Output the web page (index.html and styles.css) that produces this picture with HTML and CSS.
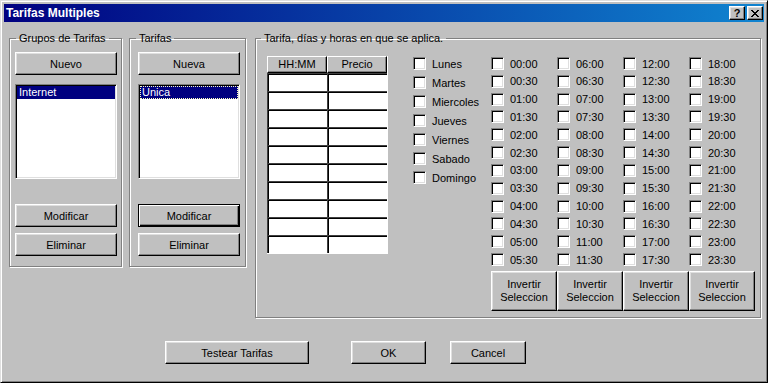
FILE: index.html
```html
<!DOCTYPE html>
<html lang="es">
<head>
<meta charset="UTF-8">
<title>Tarifas Multiples</title>
<link rel="stylesheet" href="styles.css">
</head>
<body>
<div class="window">
  <div class="titlebar">
    <span class="title">Tarifas Multiples</span>
    <div class="title-btns">
      <span class="tbtn help">?</span>
      <span class="tbtn">
        <svg width="8" height="7" viewBox="0 0 8 7" shape-rendering="crispEdges">
          <path d="M0 0h2v1h-2zM6 0h2v1h-2zM1 1h2v1h-2zM5 1h2v1h-2zM2 2h4v1h-4zM3 3h2v1h-2zM2 4h4v1h-4zM1 5h2v1h-2zM5 5h2v1h-2zM0 6h2v1h-2zM6 6h2v1h-2z" fill="#000"/>
        </svg>
      </span>
    </div>
  </div>

  <div class="client">
    <div class="groups">
      <fieldset class="group g1">
        <legend>Grupos de Tarifas</legend>
        <button class="btn">Nuevo</button>
        <div class="listbox"><div class="item sel">Internet</div></div>
        <button class="btn push">Modificar</button>
        <button class="btn second">Eliminar</button>
      </fieldset>

      <fieldset class="group g2">
        <legend>Tarifas</legend>
        <button class="btn">Nueva</button>
        <div class="listbox"><div class="item sel focus">Unica</div></div>
        <button class="btn push default">Modificar</button>
        <button class="btn second">Eliminar</button>
      </fieldset>

      <fieldset class="group g3">
        <legend>Tarifa, días y horas en que se aplica.</legend>
        <div class="grid">
          <div class="head">HH:MM</div><div class="head">Precio</div>
          <div class="cell"></div><div class="cell"></div>
          <div class="cell"></div><div class="cell"></div>
          <div class="cell"></div><div class="cell"></div>
          <div class="cell"></div><div class="cell"></div>
          <div class="cell"></div><div class="cell"></div>
          <div class="cell"></div><div class="cell"></div>
          <div class="cell"></div><div class="cell"></div>
          <div class="cell"></div><div class="cell"></div>
          <div class="cell"></div><div class="cell"></div>
          <div class="cell"></div><div class="cell"></div>
        </div>

        <div class="days">
          <div class="opt"><span class="check"></span>Lunes</div>
          <div class="opt"><span class="check"></span>Martes</div>
          <div class="opt"><span class="check"></span>Miercoles</div>
          <div class="opt"><span class="check"></span>Jueves</div>
          <div class="opt"><span class="check"></span>Viernes</div>
          <div class="opt"><span class="check"></span>Sabado</div>
          <div class="opt"><span class="check"></span>Domingo</div>
        </div>

        <div class="hours-box">
          <div class="hours">
            <div class="opt"><span class="check"></span>00:00</div>
            <div class="opt"><span class="check"></span>00:30</div>
            <div class="opt"><span class="check"></span>01:00</div>
            <div class="opt"><span class="check"></span>01:30</div>
            <div class="opt"><span class="check"></span>02:00</div>
            <div class="opt"><span class="check"></span>02:30</div>
            <div class="opt"><span class="check"></span>03:00</div>
            <div class="opt"><span class="check"></span>03:30</div>
            <div class="opt"><span class="check"></span>04:00</div>
            <div class="opt"><span class="check"></span>04:30</div>
            <div class="opt"><span class="check"></span>05:00</div>
            <div class="opt"><span class="check"></span>05:30</div>
            <div class="opt"><span class="check"></span>06:00</div>
            <div class="opt"><span class="check"></span>06:30</div>
            <div class="opt"><span class="check"></span>07:00</div>
            <div class="opt"><span class="check"></span>07:30</div>
            <div class="opt"><span class="check"></span>08:00</div>
            <div class="opt"><span class="check"></span>08:30</div>
            <div class="opt"><span class="check"></span>09:00</div>
            <div class="opt"><span class="check"></span>09:30</div>
            <div class="opt"><span class="check"></span>10:00</div>
            <div class="opt"><span class="check"></span>10:30</div>
            <div class="opt"><span class="check"></span>11:00</div>
            <div class="opt"><span class="check"></span>11:30</div>
            <div class="opt"><span class="check"></span>12:00</div>
            <div class="opt"><span class="check"></span>12:30</div>
            <div class="opt"><span class="check"></span>13:00</div>
            <div class="opt"><span class="check"></span>13:30</div>
            <div class="opt"><span class="check"></span>14:00</div>
            <div class="opt"><span class="check"></span>14:30</div>
            <div class="opt"><span class="check"></span>15:00</div>
            <div class="opt"><span class="check"></span>15:30</div>
            <div class="opt"><span class="check"></span>16:00</div>
            <div class="opt"><span class="check"></span>16:30</div>
            <div class="opt"><span class="check"></span>17:00</div>
            <div class="opt"><span class="check"></span>17:30</div>
            <div class="opt"><span class="check"></span>18:00</div>
            <div class="opt"><span class="check"></span>18:30</div>
            <div class="opt"><span class="check"></span>19:00</div>
            <div class="opt"><span class="check"></span>19:30</div>
            <div class="opt"><span class="check"></span>20:00</div>
            <div class="opt"><span class="check"></span>20:30</div>
            <div class="opt"><span class="check"></span>21:00</div>
            <div class="opt"><span class="check"></span>21:30</div>
            <div class="opt"><span class="check"></span>22:00</div>
            <div class="opt"><span class="check"></span>22:30</div>
            <div class="opt"><span class="check"></span>23:00</div>
            <div class="opt"><span class="check"></span>23:30</div>
          </div>
          <div class="inv-row">
            <button class="btn inv">Invertir<br>Seleccion</button>
            <button class="btn inv">Invertir<br>Seleccion</button>
            <button class="btn inv">Invertir<br>Seleccion</button>
            <button class="btn inv">Invertir<br>Seleccion</button>
          </div>
        </div>
      </fieldset>
    </div>

    <div class="actions">
      <button class="btn test">Testear Tarifas</button>
      <button class="btn ok">OK</button>
      <button class="btn cancel">Cancel</button>
    </div>
  </div>
</div>
</body>
</html>
```

FILE: styles.css
```css
* {
  box-sizing: border-box;
}
html, body {
  margin: 0;
  padding: 0;
}
body {
  background: #c0c0c0;
  font-family: "Liberation Sans", Arial, sans-serif;
  font-size: 11px;
  color: #000;
}

/* window frame */
.window {
  width: 768px;
  height: 383px;
  background: #c0c0c0;
  border: 1px solid;
  border-color: #dfdfdf #000 #000 #dfdfdf;
  box-shadow: inset 1px 1px #fff, inset -1px -1px #808080;
  padding: 3px;
}
.titlebar {
  height: 18px;
  background: linear-gradient(to right, #000080, #1084d0);
  display: flex;
  align-items: center;
  justify-content: space-between;
  padding: 0 1px 0 2px;
}
.title {
  color: #fff;
  font-weight: bold;
  font-size: 12px;
}
.title-btns {
  display: flex;
  gap: 2px;
}
.tbtn {
  width: 16px;
  height: 14px;
  background: #c0c0c0;
  border: 1px solid;
  border-color: #fff #000 #000 #fff;
  box-shadow: inset -1px -1px #808080, inset 1px 1px #dfdfdf;
  display: flex;
  align-items: center;
  justify-content: center;
}
.tbtn.help {
  font-weight: bold;
  font-size: 11px;
  line-height: 1;
}

.client {
  padding: 10px 0 0 5px;
}
.groups {
  display: flex;
  align-items: flex-start;
}

/* group boxes */
.group {
  margin: 0;
  min-width: 0;
  border: 1px solid #808080;
  box-shadow: inset 1px 1px #fff, 1px 1px #fff;
  display: flex;
  flex-direction: column;
}
.group legend {
  padding: 0 3px;
  line-height: 13px;
}
.g1 {
  width: 113px;
  height: 235px;
  padding: 7px 4px 10px 5px;
}
.g1 legend {
  margin-left: 1px;
}
.g2 {
  width: 117px;
  height: 235px;
  margin-left: 7px;
  padding: 7px 5px 10px 8px;
}
.g2 legend {
  margin-left: -2px;
}
.g3 {
  width: 506px;
  height: 286px;
  margin-left: 9px;
  padding: 11px 5px 0 11px;
  flex-direction: row;
  align-items: flex-start;
}
.g3 legend {
  margin-left: -6px;
}

/* buttons */
.btn {
  font: inherit;
  color: #000;
  background: #c0c0c0;
  height: 23px;
  padding: 0;
  border: 1px solid;
  border-color: #fff #000 #000 #fff;
  box-shadow: inset -1px -1px #808080, inset 1px 1px #dfdfdf;
  border-radius: 0;
}
.group .btn {
  width: 100%;
  flex: none;
}
.btn.push {
  margin-top: auto;
}
.btn.second {
  margin-top: 6px;
}
.btn.default {
  border-color: #000;
  box-shadow: inset 1px 1px #fff, inset -1px -1px #000, inset -2px -2px #808080;
}

/* list boxes */
.listbox {
  margin-top: 9px;
  height: 95px;
  flex: none;
  background: #fff;
  border: 1px solid;
  border-color: #808080 #fff #fff #808080;
  box-shadow: inset 1px 1px #000, inset -1px -1px #dfdfdf;
  padding: 1px;
}
.item {
  height: 13px;
  line-height: 13px;
  padding-left: 2px;
}
.item.sel {
  background: #000080;
  color: #fff;
}
.item.focus {
  border: 1px dotted #ffffc0;
  line-height: 11px;
  padding-left: 1px;
}

/* price grid */
.grid {
  display: grid;
  grid-template-columns: 60px 60px;
  grid-template-rows: 17px;
  grid-auto-rows: 18px;
  width: 121px;
  border-right: 1px solid #fff;
  border-bottom: 1px solid #fff;
  flex: none;
}
.head {
  border: 1px solid;
  border-color: #fff #000 #000 #fff;
  box-shadow: inset -1px -1px #808080;
  text-align: center;
  line-height: 15px;
}
.cell {
  background: #fff;
  border-top: 1px solid #404040;
  border-left: 1px solid #404040;
  box-shadow: inset 1px 1px #000;
}

/* check boxes */
.opt {
  display: flex;
  align-items: center;
  gap: 6px;
  height: 14px;
  padding-top: 1px;
  white-space: nowrap;
}
.check {
  width: 13px;
  height: 13px;
  flex: none;
  background: #fff;
  border: 1px solid;
  border-color: #808080 #fff #fff #808080;
  box-shadow: inset 1px 1px #000, inset -1px -1px #dfdfdf;
}
.days {
  width: 78px;
  margin-left: 25px;
  display: grid;
  grid-auto-rows: 19px;
  align-items: start;
  flex: none;
}
.hours-box {
  width: 264px;
  flex: none;
}
.hours {
  display: grid;
  grid-template-columns: repeat(4, 66px);
  grid-template-rows: repeat(12, 17.83px);
  grid-auto-flow: column;
  align-items: start;
}
.inv-row {
  display: flex;
  margin-top: 1px;
}
.btn.inv {
  width: 66px;
  height: 40px;
  line-height: 13px;
}

/* bottom buttons */
.actions {
  display: flex;
  margin-top: 23px;
  padding-left: 156px;
}
.btn.test {
  width: 144px;
}
.btn.ok {
  width: 75px;
  margin-left: 42px;
}
.btn.cancel {
  width: 76px;
  margin-left: 24px;
}
```
